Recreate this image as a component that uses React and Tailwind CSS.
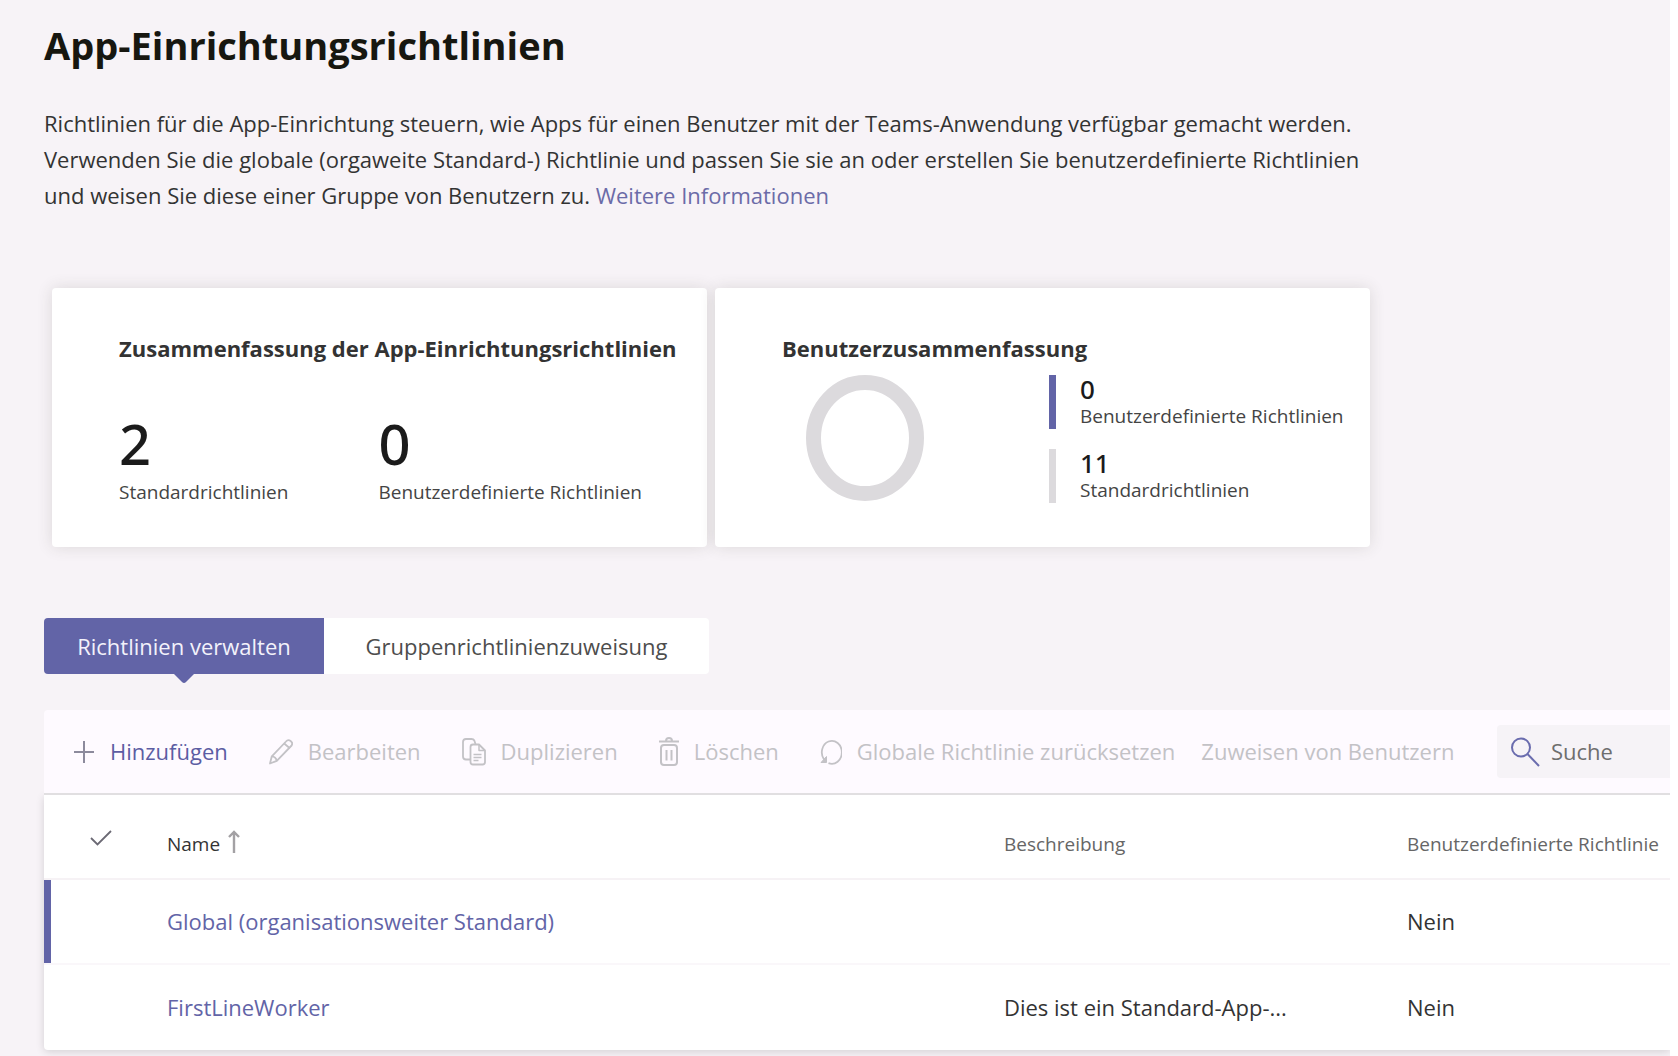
import React, { useState } from 'react';

const POLICIES = [
  { name: 'Global (organisationsweiter Standard)', description: '', custom: 'Nein' },
  { name: 'FirstLineWorker', description: 'Dies ist ein Standard-App-...', custom: 'Nein' },
];

const PlusIcon = () => (
  <svg className="h-6 w-5" viewBox="0 0 20 24" fill="none" stroke="#8c8a9c" strokeWidth="2">
    <path d="M10 1v22M0 12h20" />
  </svg>
);

const PencilIcon = () => (
  <svg className="h-7 w-6" viewBox="0 0 24 28" fill="none" stroke="currentColor" strokeWidth="1.8" strokeLinejoin="round">
    <path d="M1 25.500l1.800-7.200L17 3.500q2-2.500 4.600-.6t1 4.600L7.800 22.800z" />
    <path d="M15.200 5.500l5.600 4.800M2.800 18.300q4 .2 5 4.500" />
  </svg>
);

const CopyIcon = () => (
  <svg className="h-7 w-6" viewBox="0 0 24 28" fill="none" stroke="currentColor" strokeWidth="1.8" strokeLinejoin="round">
    <path d="M8.500 21.500H4q-3 0-3-3V4q0-3 3-3h5.500q2 0 2.800 1.500L13.500 6" />
    <path d="M8.500 9q0-2.500 2.500-2.500h6l6 6V24q0 2.500-2.500 2.500H11q-2.500 0-2.500-2.500z" />
    <path d="M17 6.500v6h6M11.500 16.500h8M11.500 19.500h8M11.500 22.500h5" strokeWidth="1.5" />
  </svg>
);

const TrashIcon = () => (
  <svg className="h-8 w-5" viewBox="0 0 20 32" fill="none" stroke="currentColor" strokeWidth="2">
    <path d="M0 5.500h20M7 5q0-3 3-3t3 3M5 9h10q3 0 3 3v14q0 3-3 3H5q-3 0-3-3V12q0-3 3-3z" />
    <path d="M7.500 14v10.500M12.500 14v10.500" />
  </svg>
);

const ResetIcon = () => (
  <svg className="h-7 w-[22px]" viewBox="0 0 22 28" fill="none" stroke="currentColor" strokeWidth="1.8">
    <path d="M4 21.500A10 11.500 0 1 1 8.500 25.200" />
    <path d="M1 24.500h5.500v-6z" fill="currentColor" strokeWidth="1" />
  </svg>
);

const SearchIcon = () => (
  <svg className="h-8 w-8 shrink-0" viewBox="0 0 32 32" fill="none" stroke="#6a6cae" strokeWidth="2">
    <circle cx="12" cy="11.500" r="9" />
    <path d="M18.500 18L30 30" />
  </svg>
);

const TabArrow = () => (
  <svg className="absolute top-full left-1/2 h-[9px] w-5 -translate-x-1/2" viewBox="0 0 20 9" fill="#6264a7">
    <path d="M0 0h20l-8 8q-2 2-4 0z" />
  </svg>
);

const TOOLS = [
  { label: 'Bearbeiten', Icon: PencilIcon },
  { label: 'Duplizieren', Icon: CopyIcon },
  { label: 'Löschen', Icon: TrashIcon },
  { label: 'Globale Richtlinie zurücksetzen', Icon: ResetIcon },
];

const App = () => {
  const [tab, setTab] = useState('manage');
  const [query, setQuery] = useState('');

  const tabClass = (name) =>
    name === tab
      ? 'relative bg-[#6264a7] text-[#f3f2fb]'
      : 'relative bg-white text-[#4d4d4d]';

  return (
    <div className="bg-white pr-2 font-['Open_Sans','Noto_Sans',sans-serif] text-[22px] text-[#333]">
      <main className="min-h-screen overflow-hidden bg-[#f7f3f7] pt-[19px] pl-11">
        <h1 className="text-[38px] leading-[52px] font-bold text-[#171710]">App-Einrichtungsrichtlinien</h1>
        <p className="mt-[34px] max-w-[1340px] leading-9">
          Richtlinien für die App-Einrichtung steuern, wie Apps für einen Benutzer mit der Teams-Anwendung verfügbar
          gemacht werden. Verwenden Sie die globale (orgaweite Standard-) Richtlinie und passen Sie sie an oder
          erstellen Sie benutzerdefinierte Richtlinien und weisen Sie diese einer Gruppe von Benutzern zu.{' '}
          <a href="#info" className="text-[#6b6ba8]">Weitere Informationen</a>
        </p>

        {/* Summary cards */}
        <div className="mt-[75px] grid max-w-[1326px] grid-cols-2 gap-2 pl-2">
          <section className="rounded bg-white pt-[42px] pb-[39px] pl-[67px] shadow-[0_0_16px_rgba(60,60,40,0.14)]">
            <h2 className="leading-9 font-bold">Zusammenfassung der App-Einrichtungsrichtlinien</h2>
            <div className="mt-11 flex gap-[90px]">
              <div>
                <div className="font-['Noto_Sans',sans-serif] text-[56px] leading-[66px] font-medium text-[#1b1b1b]">2</div>
                <div className="text-[19px] leading-8 text-[#444]">Standardrichtlinien</div>
              </div>
              <div>
                <div className="font-['Noto_Sans',sans-serif] text-[56px] leading-[66px] font-medium text-[#1b1b1b]">0</div>
                <div className="text-[19px] leading-8 text-[#444]">Benutzerdefinierte Richtlinien</div>
              </div>
            </div>
          </section>

          <section className="rounded bg-white pt-[42px] pb-[39px] pl-[67px] shadow-[0_0_16px_rgba(60,60,40,0.14)]">
            <h2 className="leading-9 font-bold">Benutzerzusammenfassung</h2>
            <div className="mt-[9px] flex gap-[125px] pl-6">
              <svg className="h-[126px] w-[118px]" viewBox="0 0 118 126" fill="none" stroke="#dcdadd" strokeWidth="15">
                <ellipse cx="59" cy="63" rx="51.500" ry="55.500" />
              </svg>
              <div className="flex flex-col gap-5">
                <div className="border-l-[7px] border-[#6264a7] pl-6">
                  <div className="font-['Noto_Sans',sans-serif] text-[26px] leading-7 font-medium text-[#1b1b1b]">0</div>
                  <div className="text-[19px] leading-[26px] text-[#444]">Benutzerdefinierte Richtlinien</div>
                </div>
                <div className="border-l-[7px] border-[#dcdadd] pl-6">
                  <div className="font-['Noto_Sans',sans-serif] text-[26px] leading-7 font-medium text-[#1b1b1b]">11</div>
                  <div className="text-[19px] leading-[26px] text-[#444]">Standardrichtlinien</div>
                </div>
              </div>
            </div>
          </section>
        </div>

        {/* Tabs */}
        <div role="tablist" className="mt-[71px] flex">
          <button
            type="button"
            role="tab"
            aria-selected={tab === 'manage'}
            onClick={() => setTab('manage')}
            className={`h-14 w-[280px] rounded-l ${tabClass('manage')}`}
          >
            Richtlinien verwalten
            {tab === 'manage' && <TabArrow />}
          </button>
          <button
            type="button"
            role="tab"
            aria-selected={tab === 'group'}
            onClick={() => setTab('group')}
            className={`h-14 w-[385px] rounded-r ${tabClass('group')}`}
          >
            Gruppenrichtlinienzuweisung
            {tab === 'group' && <TabArrow />}
          </button>
        </div>

        {/* Toolbar */}
        <div className="relative mt-9 flex h-[85px] items-center rounded-tl border-b-2 border-[#e1dfe1] bg-[#fefaff] pl-[30px] whitespace-nowrap">
          <div className="flex items-center gap-[41px]">
            <button type="button" className="flex items-center gap-4 text-[#5c5da3]">
              <PlusIcon />
              Hinzufügen
            </button>
            {TOOLS.map(({ label, Icon }) => (
              <button key={label} type="button" disabled className="flex items-center gap-[15px] text-[#c3c2c6]">
                <Icon />
                {label}
              </button>
            ))}
          </div>
          <button type="button" disabled className="ml-[26px] text-[#c3c2c6]">
            Zuweisen von Benutzern
          </button>
          <label className="ml-auto flex h-[53px] w-[173px] items-center gap-[10px] rounded-l bg-[#f6f3f7] pl-3">
            <SearchIcon />
            <input
              type="text"
              aria-label="Suche"
              placeholder="Suche"
              value={query}
              onChange={(e) => setQuery(e.target.value)}
              className="w-full min-w-0 bg-transparent outline-none placeholder:text-[#6e6e6e]"
            />
          </label>
        </div>

        {/* Policy list */}
        <table className="w-full table-fixed border-separate border-spacing-0 rounded-bl bg-white text-left shadow-[0_2px_8px_rgba(0,0,0,0.14)]">
          <colgroup>
            <col className="w-[123px]" />
            <col />
            <col className="w-[403px]" />
            <col className="w-[263px]" />
          </colgroup>
          <thead>
            <tr className="h-[85px] text-[19px] text-[#666]">
              <th className="border-b-2 border-[#f6f2f5] pt-4 pl-[46px]">
                <svg className="mb-[14px] h-4 w-[22px]" viewBox="0 0 22 16" fill="none" stroke="#6b6974" strokeWidth="1.800">
                  <path d="M1 8l6.500 6.500L21 1" />
                </svg>
              </th>
              <th className="border-b-2 border-[#f6f2f5] pt-4 font-normal text-[#333]">
                <button type="button" className="flex items-center gap-2">
                  Name
                  <svg className="mb-[6px] h-6 w-3" viewBox="0 0 12 24" fill="none" stroke="#a3a1a4" strokeWidth="2.400">
                    <path d="M6 23V2M1 7l5-5 5 5" />
                  </svg>
                </button>
              </th>
              <th className="border-b-2 border-[#f6f2f5] pt-4 font-normal">Beschreibung</th>
              <th className="border-b-2 border-[#f6f2f5] pt-4 font-normal whitespace-nowrap">Benutzerdefinierte Richtlinie</th>
            </tr>
          </thead>
          <tbody>
            {POLICIES.map((policy, i) => (
              <tr key={policy.name} className="group h-[85px]">
                <td className="border-b-2 border-[#faf7fa] p-0 group-last:border-b-0">
                  {i === 0 && <div className="h-[83px] w-[7px] bg-[#6264a7]" />}
                </td>
                <td className="border-b-2 border-[#faf7fa] group-last:border-b-0">
                  <a href="#policy" className="text-[#6264a7]">{policy.name}</a>
                </td>
                <td className="border-b-2 border-[#faf7fa] group-last:border-b-0">{policy.description}</td>
                <td className="border-b-2 border-[#faf7fa] group-last:border-b-0">{policy.custom}</td>
              </tr>
            ))}
          </tbody>
        </table>
      </main>
    </div>
  );
};

export default App;
